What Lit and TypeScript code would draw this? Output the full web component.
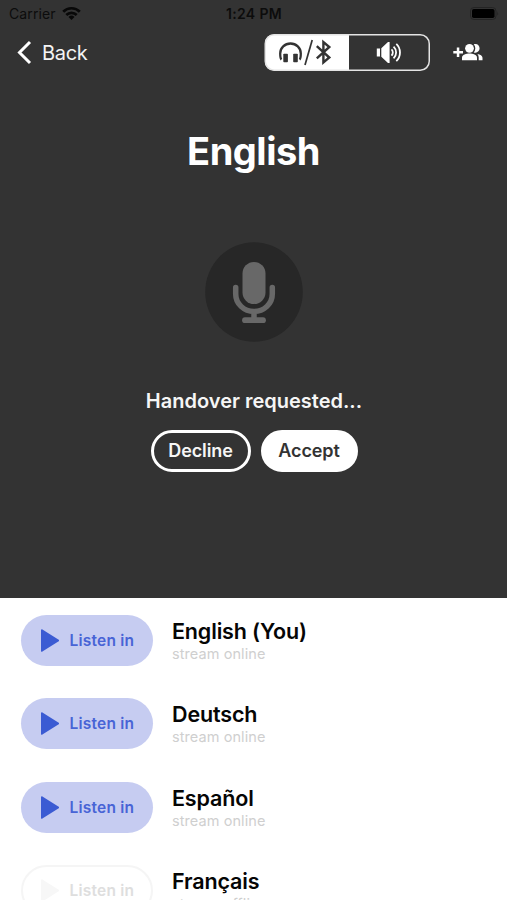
import { LitElement, html, css } from "lit";
import { customElement, property } from "lit/decorators.js";
import { classMap } from "lit/directives/class-map.js";

@customElement("stream-row")
class StreamRow extends LitElement {
  @property() name = "";
  @property({ type: Boolean }) online = false;

  static styles = css`
    :host { display: flex; height: 51px; margin-bottom: 32.5px; padding-left: 20.5px; }
    .listen {
      box-sizing: border-box; width: 132px; height: 51px; border: none; border-radius: 25.5px;
      background: #c6ccf1; color: #4864d6; padding: 0 0 0 20px;
      display: flex; align-items: center; gap: 10.5px;
      font: 600 15.5px/20px Inter, sans-serif; letter-spacing: 0.22px; white-space: nowrap;
    }
    .listen svg { width: 18.5px; height: 23px; fill: #3b5bd3; flex: none; }
    .listen span { padding-top: 1.5px; }
    .offline { background: #fff; border: 2px solid #f5f5f5; color: #dedede; padding-left: 18px; }
    .offline svg { fill: #f7f7f7; }
    .info { padding-left: 19.5px; white-space: nowrap; }
    .name { font: 600 21.5px/26px Inter, sans-serif; letter-spacing: -0.15px; color: #050505; padding-top: 3px; }
    .status { font: 400 14.5px/18px Inter, sans-serif; letter-spacing: 0.08px; color: #cfcfcf; padding-top: 1px; }
  `;

  render() {
    return html`
      <button class=${classMap({ listen: true, offline: !this.online })}>
        <svg viewBox="0 0 18.5 23"><path d="M0 1.1C0 .3.8 0 1.4.4l16.3 10.3c.7.4.7 1.2 0 1.6L1.4 22.6C.8 23 0 22.7 0 21.9z" /></svg>
        <span>Listen in</span>
      </button>
      <div class="info">
        <div class="name">${this.name}</div>
        <div class="status">stream ${this.online ? "online" : "offline"}</div>
      </div>
    `;
  }
}

@customElement("app-root")
class AppRoot extends LitElement {
  static styles = css`
    :host { display: flex; flex-direction: column; height: 900px; overflow: hidden; background: #fff; font-family: Inter, sans-serif; }
    .dark { height: 598px; flex: none; background: #333; color: #fff; display: flex; flex-direction: column; align-items: center; }
    .status { width: 100%; height: 28px; box-sizing: border-box; padding: 0 8px 0 9px; display: grid; grid-template-columns: 1fr auto 1fr; align-items: center; color: #0c0c0c; font-size: 14px; line-height: 28px; white-space: nowrap; }
    .carrier { display: flex; align-items: center; gap: 6px; letter-spacing: 0.1px; }
    .wifi { width: 19px; height: 15px; margin-top: -2px; }
    .time { font-weight: 600; letter-spacing: 0.35px; }
    .battery { justify-self: end; width: 29px; height: 13px; margin-top: -2px; }
    .nav { width: 100%; height: 48px; box-sizing: border-box; padding: 0 24px 0 17px; display: flex; align-items: center; }
    .back { display: flex; align-items: center; gap: 10px; font-size: 20px; line-height: 26px; letter-spacing: -0.3px; color: #f4f4f4; }
    .back span { padding-top: 1px; }
    .back svg { width: 15px; height: 25px; }
    .switch { margin-left: auto; width: 166px; height: 37px; }
    .people { width: 30px; height: 20px; margin-left: 23px; }
    h1 { margin: 50px 0 0; font-size: 38px; line-height: 50px; font-weight: 700; letter-spacing: -0.5px; }
    .mic { width: 98px; height: 100px; margin-top: 66px; }
    .notice { margin: 46px 0 0 1px; font-size: 20px; line-height: 27px; font-weight: 600; letter-spacing: 0; color: #f6f6f6; }
    .actions { display: flex; gap: 10px; margin: 14.5px 0 0 1px; }
    .actions button { box-sizing: border-box; height: 42px; border-radius: 21px; border: 3px solid #fff; padding: 0; font: 600 18px/24px Inter, sans-serif; letter-spacing: -0.1px; }
    .decline { width: 100px; background: transparent; color: #f6f6f6; }
    .accept { width: 97px; background: #fff; color: #333; }
    .list { padding-top: 16.5px; }
  `;

  render() {
    return html`
      <section class="dark">
        <div class="status">
          <div class="carrier">
            <span>Carrier</span>
            <svg class="wifi" viewBox="0 0 19 15" fill="none" stroke="#080808" stroke-width="2.7">
              <path d="M1.2 5.7a11.7 11.7 0 0 1 16.6 0M4.3 9a7.4 7.4 0 0 1 10.4 0" />
              <path d="M9.5 14l-3-3a4.3 4.3 0 0 1 6 0z" fill="#080808" stroke="none" />
            </svg>
          </div>
          <span class="time">1:24 PM</span>
          <svg class="battery" viewBox="0 0 29 13">
            <rect x=".5" y=".5" width="25.5" height="12" rx="3.5" fill="none" stroke="#242424" />
            <rect x="2" y="2" width="22.5" height="9" rx="1.8" fill="#000" />
            <path d="M27.3 4.5q1.5 2 0 4z" fill="#242424" />
          </svg>
        </div>
        <nav class="nav">
          <div class="back">
            <svg viewBox="0 0 15 25" fill="none" stroke="#fff" stroke-width="3"><path d="M13 2L2.5 12.5 13 23" /></svg>
            <span>Back</span>
          </div>
          <svg class="switch" viewBox="0 0 166 37">
            <path d="M9.500 .5H85v36H9.500a8.500 8.500 0 0 1-8.500-8.500V9A8.500 8.500 0 0 1 9.500 .5z" fill="#fff" />
            <rect x="1.25" y=".75" width="164" height="35.5" rx="9" fill="none" stroke="#e4e4e4" stroke-width="1.5" />
            <g fill="none" stroke="#333">
              <path d="M17.5 25.500c-1.300-1-1.300-3-1.300-6a10.300 10 0 0 1 20.600 0c0 3 0 5-1.300 6" stroke-width="2.3" />
              <path d="M41 31L48.200 6" stroke-width="1.7" />
              <path d="M52.800 12.200L65.300 23.500 59.400 28.500V8L65.300 13 52.800 24.300" stroke-width="2.4" />
            </g>
            <rect x="19.3" y="19.7" width="4.6" height="8.6" rx=".8" fill="#333" />
            <rect x="29.2" y="19.7" width="4.6" height="8.6" rx=".8" fill="#333" />
            <path d="M112.800 14.500h3.200v8h-3.200zM117.300 14.300l6.700-6.300h1.600v21h-1.600l-6.700-6.300z" fill="#fff" />
            <g fill="none" stroke="#fff" stroke-width="1.8">
              <path d="M127.500 15.400a4.300 4.300 0 0 1 0 6.200M129.600 12.600a8.200 8.200 0 0 1 0 11.800M132.300 9.900a11.900 11.900 0 0 1 0 17.200" />
            </g>
          </svg>
          <svg class="people" viewBox="0 0 30 20" fill="#fff">
            <path d="M3.800 5.500h2.500V9H10v2.500H6.300V15H3.800v-3.500H.3V9h3.500z" />
            <circle cx="16.500" cy="6.300" r="4.400" />
            <path d="M9 18.200v-2.600c0-2.600 4.300-4 7.500-4s7.500 1.400 7.500 4v2.600z" />
            <path d="M20.800 2.200c3.200-1.200 5.800 1.200 5.800 4.100s-2.700 5.200-5.800 4.100c2-2.300 2-5.900 0-8.200zM24.300 11.900c3 .5 5.200 1.800 5.200 3.900v2.400h-3.800v-2.600c0-1.500-.4-2.700-1.400-3.700z" />
          </svg>
        </nav>
        <h1>English</h1>
        <svg class="mic" viewBox="0 0 98 100">
          <ellipse cx="49" cy="50" rx="48.8" ry="49.8" fill="#272727" />
          <rect x="37.5" y="20" width="23" height="42" rx="11.5" fill="#686868" />
          <g fill="none" stroke="#686868" stroke-width="5.5" stroke-linecap="round">
            <path d="M30.700 45.500v6.500a18.300 17.500 0 0 0 36.600 0V45.500M49 69.500v8" />
            <path d="M40 78.200h18" stroke-width="5.8" />
          </g>
        </svg>
        <div class="notice">Handover requested...</div>
        <div class="actions">
          <button class="decline">Decline</button>
          <button class="accept">Accept</button>
        </div>
      </section>
      <section class="list">
        <stream-row name="English (You)" online></stream-row>
        <stream-row name="Deutsch" online></stream-row>
        <stream-row name="Español" online></stream-row>
        <stream-row name="Français"></stream-row>
      </section>
    `;
  }
}
